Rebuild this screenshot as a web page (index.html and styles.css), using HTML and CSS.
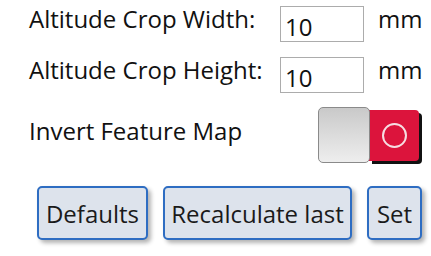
FILE: index.html
```html
<!DOCTYPE html>
<html>

<head>
    <link rel="stylesheet" href="styles.css">
</head>

<body>

    <div class="panel">
        <div class="field-row">
            <label class="field-label">Altitude Crop Width:</label>
            <input class="field-input" type="text" value="10">
            <span class="field-unit">mm</span>
        </div>
        <div class="field-row">
            <label class="field-label">Altitude Crop Height:</label>
            <input class="field-input" type="text" value="10">
            <span class="field-unit">mm</span>
        </div>

        <div class="toggle-row">
            <span class="toggle-label">Invert Feature Map</span>
            <div class="toggle">
                <div class="toggle-knob"></div>
                <div class="toggle-state">
                    <span class="toggle-ring"></span>
                </div>
            </div>
        </div>

        <div class="button-row">
            <button class="action-btn btn-defaults">Defaults</button>
            <button class="action-btn btn-recalc">Recalculate last</button>
            <button class="action-btn btn-set">Set</button>
        </div>
    </div>

</body>

</html>
```

FILE: styles.css
```css
body {
    margin: 0;
    background-color: white;
    font-family: "Open Sans", "Noto Sans", sans-serif;
    font-size: 24px;
    color: #111;
}

.panel {
    width: 431px;
    height: 256px;
    padding-left: 29px;
    box-sizing: border-box;
}

/* Numeric fields */
.field-row {
    display: flex;
    align-items: flex-start;
    height: 51px;
}

.field-label {
    width: 251px;
    line-height: 28px;
    padding-top: 5px;
    white-space: nowrap;
}

.field-input {
    width: 84px;
    height: 36px;
    margin-top: 6px;
    box-sizing: border-box;
    border: 1px solid #acacac;
    padding: 5px 4px 0 4px;
    font-family: inherit;
    font-size: 24px;
    line-height: 28px;
    color: #111;
    outline: none;
}

.field-unit {
    margin-left: 14px;
    line-height: 28px;
    padding-top: 5px;
}

/* Toggle switch */
.toggle-row {
    display: flex;
    align-items: flex-start;
    height: 84px;
}

.toggle-label {
    width: 289px;
    line-height: 28px;
    padding-top: 15px;
    white-space: nowrap;
}

.toggle {
    display: flex;
    margin-top: 5px;
}

.toggle-knob {
    width: 50px;
    height: 54px;
    border: 1px solid #8a8a8a;
    border-radius: 5px;
    background: linear-gradient(#c9c9c9, #eeeeee);
    position: relative;
    z-index: 1;
}

.toggle-state {
    width: 50px;
    height: 51px;
    margin-top: 3px;
    margin-left: -1px;
    background-color: #dc143c;
    border-radius: 0 4px 4px 0;
    box-shadow: 3px 3px 0 #111;
    display: flex;
    align-items: center;
    justify-content: center;
}

.toggle-ring {
    width: 21px;
    height: 21px;
    border: 2px solid #f6dde2;
    border-radius: 50%;
}

/* Buttons */
.button-row {
    display: flex;
    gap: 15px;
    padding-left: 8px;
}

.action-btn {
    height: 54px;
    box-sizing: border-box;
    border: 2px solid #2e6dc2;
    border-radius: 5px;
    background-color: #dde3ec;
    box-shadow: 3px 3px 4px rgba(0, 0, 0, 0.3);
    font-family: inherit;
    font-size: 24px;
    color: #1a1a1a;
    padding: 0;
}

.btn-defaults {
    width: 111px;
}

.btn-recalc {
    width: 189px;
}

.btn-set {
    width: 55px;
}
```
